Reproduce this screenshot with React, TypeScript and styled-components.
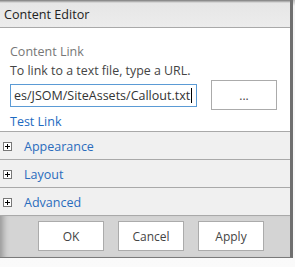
import React from "react";
import styled, { createGlobalStyle } from "styled-components";

const Global = createGlobalStyle`
  html, body { margin: 0; padding: 0; background: #f2f2f2; }
  body { font-family: "Open Sans", "Noto Sans", sans-serif; }
`;

const Frame = styled.div`
  width: 295px;
  height: 267px;
  display: flex;
  flex-direction: column;
  background: linear-gradient(#bdbdbd, #f4f4f4 6px, #fafafa);
  overflow: hidden;
`;

const Panel = styled.div`
  width: 290px;
  height: 257px;
  display: flex;
  flex-direction: column;
  border-right: 3px solid #6f6f6f;
  border-bottom: 1px solid #7a7a7a;
  background: #f0f0f0;
  position: relative;
  box-shadow: inset -7px 0 6px -4px rgba(0, 0, 0, 0.25), inset 3px 0 3px -2px rgba(0, 0, 0, 0.25);
`;

const Header = styled.div`
  height: 28px;
  flex: none;
  box-sizing: border-box;
  border-bottom: 1px solid #a9a9a9;
  background: linear-gradient(#7a7a7a, #e6e6e6 3px, #ececec);
  display: flex;
  align-items: center;
  padding: 2px 0 0 4px;
  font-size: 12.6px;
  color: #222;
`;

const Content = styled.div`
  background: #fff;
  height: 104px;
  flex: none;
  box-sizing: border-box;
  border-bottom: 1px solid #a9a9a9;
  padding: 15px 0 0 10px;
  display: flex;
  flex-direction: column;
`;

const Label = styled.div`
  font-size: 12.5px;
  color: #777;
  line-height: 18px;
`;

const Hint = styled.div`
  font-size: 12.4px;
  color: #444;
  line-height: 18px;
  margin-top: 1px;
`;

const InputRow = styled.div`
  display: flex;
  align-items: flex-start;
  gap: 14px;
  margin-top: 0;
`;

const FakeInput = styled.div`
  width: 187px;
  height: 23px;
  box-sizing: border-box;
  border: 1px solid #5b9bd5;
  margin-top: 4px;
  display: flex;
  align-items: center;
  padding-left: 3px;
  overflow: hidden;
  white-space: nowrap;
  font-size: 12.5px;
  color: #333;
`;

const Caret = styled.span`
  display: inline-block;
  width: 1px;
  height: 15px;
  margin-left: 1px;
  background: #000;
`;

const Button = styled.button`
  width: 66px;
  height: 30px;
  box-sizing: border-box;
  border: 1px solid #ababab;
  background: #fff;
  font-family: inherit;
  font-size: 12px;
  color: #444;
  padding: 0;
  cursor: pointer;
`;

const TestLink = styled.div`
  font-size: 12.5px;
  color: #1d6ac1;
  line-height: 18px;
  margin-top: 3px;
`;

const Section = styled.div`
  height: 28px;
  flex: none;
  box-sizing: border-box;
  border-bottom: 1px solid #a9a9a9;
  display: flex;
  align-items: center;
  padding: 1px 0 0 3px;
  gap: 12px;
  font-size: 12.5px;
  color: #2a6cbd;
  background: #f0f0f0;
`;

const PlusBox = styled.span`
  width: 9px;
  height: 9px;
  box-sizing: border-box;
  border: 1px solid #777;
  background: #fff;
  position: relative;
  flex: none;
  &::before {
    content: "";
    position: absolute;
    left: 1px;
    top: 3px;
    width: 5px;
    height: 1px;
    background: #000;
  }
  &::after {
    content: "";
    position: absolute;
    left: 3px;
    top: 1px;
    width: 1px;
    height: 5px;
    background: #000;
  }
`;

const Footer = styled.div`
  flex: 1;
  background: #d4d4d4;
  display: flex;
  justify-content: flex-start;
  align-items: flex-start;
  gap: 14px;
  padding: 5px 0 0 38px;
  box-shadow: inset 8px 0 6px -5px rgba(0, 0, 0, 0.3);
`;

const sections = ["Appearance", "Layout", "Advanced"];

export default function App() {
  return (
    <>
      <Global />
      <Frame>
        <Panel>
          <Header>Content Editor</Header>
          <Content>
            <Label>Content Link</Label>
            <Hint>To link to a text file, type a URL.</Hint>
            <InputRow>
              <FakeInput>
                es/JSOM/SiteAssets/Callout.txt
                <Caret />
              </FakeInput>
              <Button>...</Button>
            </InputRow>
            <TestLink>Test Link</TestLink>
          </Content>
          {sections.map((s) => (
            <Section key={s}>
              <PlusBox />
              {s}
            </Section>
          ))}
          <Footer>
            <Button>OK</Button>
            <Button>Cancel</Button>
            <Button>Apply</Button>
          </Footer>
        </Panel>
      </Frame>
    </>
  );
}
